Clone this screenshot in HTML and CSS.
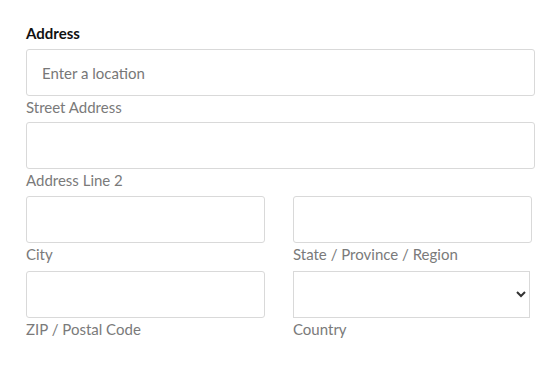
FILE: index.html
```html
<!DOCTYPE html>
<html lang="en">
<head>
<meta charset="utf-8">
<title>Address</title>
<link rel="stylesheet" href="styles.css">
</head>
<body>
<form class="address">
  <div class="field-title">Address</div>
  <div class="field field-street">
    <input class="text-input" type="text" placeholder="Enter a location">
    <label class="sublabel">Street Address</label>
  </div>
  <div class="field">
    <input class="text-input" type="text">
    <label class="sublabel">Address Line 2</label>
  </div>
  <div class="pair pair-city">
    <div class="field">
      <input class="text-input" type="text">
      <label class="sublabel">City</label>
    </div>
    <div class="field">
      <input class="text-input" type="text">
      <label class="sublabel">State / Province / Region</label>
    </div>
  </div>
  <div class="pair">
    <div class="field">
      <input class="text-input" type="text">
      <label class="sublabel">ZIP / Postal Code</label>
    </div>
    <div class="field">
      <select class="select-input"><option></option></select>
      <label class="sublabel">Country</label>
    </div>
  </div>
</form>
</body>
</html>
```

FILE: styles.css
```css
html, body {
  margin: 0;
  padding: 0;
  background: #ffffff;
}

body {
  font-family: Lato, "Open Sans", "Liberation Sans", sans-serif;
  color: #111111;
}

.address {
  width: 509px;
  padding: 23px 0 0 26px;
  display: flex;
  flex-direction: column;
}

.field-title {
  font-size: 15px;
  font-weight: 700;
  line-height: 20px;
  margin-bottom: 6px;
  color: #111111;
}

.field {
  display: flex;
  flex-direction: column;
}

.text-input {
  box-sizing: border-box;
  height: 47px;
  width: 100%;
  margin: 0;
  padding: 0 15px;
  border: 1px solid #d9d9d9;
  border-radius: 3px;
  background: #ffffff;
  font-family: inherit;
  font-size: 15px;
  color: #333333;
  outline: none;
}

.text-input::placeholder {
  color: #777777;
}

.select-input {
  box-sizing: border-box;
  height: 47px;
  width: 237px;
  margin: 0;
  padding: 0 8px;
  border: 1px solid #d9d9d9;
  border-radius: 0;
  background: #ffffff;
  font-family: inherit;
  font-size: 15px;
  color: #333333;
}

.sublabel {
  display: block;
  font-size: 15px;
  line-height: 18px;
  margin-top: 2px;
  margin-bottom: 7px;
  color: #7a7a7a;
}

.field-street .sublabel {
  margin-bottom: 6px;
}

.pair-city .sublabel {
  margin-bottom: 8px;
}

.pair {
  display: grid;
  grid-template-columns: 239px 239px;
  column-gap: 28px;
}
```
